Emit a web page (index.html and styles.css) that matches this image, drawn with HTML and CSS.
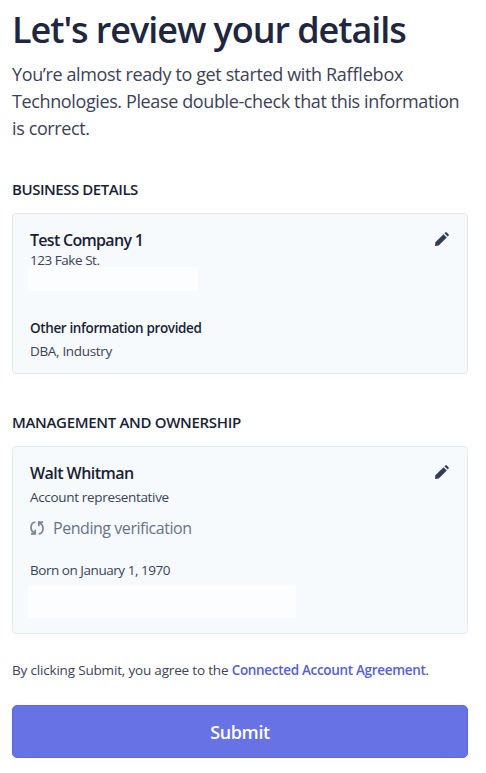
FILE: index.html
```html
<!DOCTYPE html>
<html lang="en">
	<head>
		<meta charset="UTF-8">
		<link rel="stylesheet" href="styles.css">
		<title>Review your details</title>
	</head>
	<body>
		<div class="container">
			<h1>Let's review your details</h1>
			<p class="lead">You’re almost ready to get started with <span class="company">Rafflebox</span><br>Technologies. Please double-check that this information<br>is correct.</p>

			<h2 class="business">BUSINESS DETAILS</h2>
			<div class="card">
				<div class="info">
					<h3>Test Company 1</h3>
					<p class="address">123 Fake St.</p>
					<div class="blank"></div>
					<h4>Other information provided</h4>
					<p class="other">DBA, Industry</p>
				</div>
				<svg class="edit" width="14" height="14" viewBox="0 0 14 14">
					<path d="M0 14l.4-3.700 8.100-8.100 3.300 3.300-8.100 8.100z"/>
					<path d="M9.400 1.300l.8-.8c.5-.5 1.100-.5 1.600 0l1.700 1.700c.5.5.5 1.100 0 1.600l-.8.8z"/>
				</svg>
			</div>

			<h2 class="management">MANAGEMENT AND OWNERSHIP</h2>
			<div class="card">
				<div class="info">
					<h3>Walt Whitman</h3>
					<p class="role">Account representative</p>
					<p class="pending">
						<svg width="14" height="14" viewBox="0 0 14 14">
							<path d="M5.300 1C2.500 1.500 1 4 1 6.800c0 2.300 1.200 4.100 3.200 5.200M1 12.900h4.200V8.700M8.700 13c2.800-.5 4.300-3 4.300-5.800 0-2.300-1.200-4.100-3.200-5.200M13 1.100H8.800v4.200"/>
						</svg>
						<span>Pending verification</span>
					</p>
					<p class="born">Born on January 1, 1970</p>
					<div class="blank wide"></div>
				</div>
				<svg class="edit" width="14" height="14" viewBox="0 0 14 14">
					<path d="M0 14l.4-3.700 8.100-8.100 3.300 3.300-8.100 8.100z"/>
					<path d="M9.400 1.300l.8-.8c.5-.5 1.100-.5 1.600 0l1.700 1.700c.5.5.5 1.100 0 1.600l-.8.8z"/>
				</svg>
			</div>

			<p class="agree">By clicking Submit, you agree to the <a href="#">Connected Account Agreement</a>.</p>
			<button type="button" class="btn">Submit</button>
		</div>
	</body>
</html>
```
FILE: styles.css
```css
body {
	margin: 0;
	background: #fff;
	font-family: "Open Sans", "Noto Sans", sans-serif;
	color: #3c4257;
}
h1, h2, h3, h4, p {
	margin: 0;
	white-space: nowrap;
}
.container {
	width: 456px;
	padding: 9px 0 0 12px;
}
h1 {
	font-size: 36px;
	line-height: 42px;
	font-weight: 600;
	letter-spacing: -1.05px;
	color: #20263f;
}
.lead {
	margin-top: 10px;
	font-size: 18px;
	line-height: 27px;
	letter-spacing: -0.38px;
}
.company {
	letter-spacing: -0.2px;
}
h2 {
	font-size: 15px;
	line-height: 20px;
	font-weight: 600;
	letter-spacing: -0.45px;
	color: #1a1f36;
}
.business {
	margin: 37px 0 14px;
}
.management {
	margin: 38px 0 14px;
	letter-spacing: -0.32px;
}
.card {
	display: flex;
	justify-content: space-between;
	box-sizing: border-box;
	height: 161px;
	padding: 16px 18px 0 17px;
	border: 1px solid #e3e8ee;
	border-radius: 4px;
	background: #f6fafd;
}
.management + .card {
	height: 188px;
}
h3 {
	font-size: 16px;
	line-height: 20px;
	font-weight: 600;
	letter-spacing: -0.7px;
	color: #1a1f36;
}
.management + .card h3 {
	letter-spacing: -0.55px;
}
h4 {
	margin-top: 26px;
	font-size: 13.5px;
	line-height: 22px;
	font-weight: 600;
	letter-spacing: -0.37px;
	color: #1a1f36;
}
.address, .other, .role, .born {
	font-size: 13.5px;
	line-height: 20px;
	letter-spacing: -0.46px;
}
.other {
	margin-top: 2px;
	letter-spacing: -0.33px;
}
.role {
	margin-top: 4px;
	letter-spacing: -0.33px;
}
.blank {
	width: 170px;
	height: 24px;
	margin: -3px 0 0 -2px;
	background: #fcfdfe;
}
.blank.wide {
	width: 268px;
	height: 32px;
	margin-top: 6px;
}
.edit {
	margin-top: 2px;
	fill: #343b54;
}
.pending {
	display: flex;
	align-items: center;
	gap: 9px;
	margin-top: 9px;
	font-size: 16px;
	line-height: 24px;
	letter-spacing: -0.45px;
	color: #697386;
}
.pending svg {
	fill: none;
	stroke: #7a8497;
	stroke-width: 1.7;
}
.born {
	margin-top: 20px;
}
.agree {
	margin-top: 26px;
	font-size: 13.5px;
	line-height: 20px;
	letter-spacing: -0.18px;
}
.agree a {
	font-weight: 600;
	letter-spacing: -0.32px;
	color: #5560d8;
	text-decoration: none;
}
.btn {
	display: block;
	width: 456px;
	height: 53px;
	margin-top: 25px;
	padding: 0;
	border: 1px solid #5b66df;
	border-radius: 5px;
	background: #6772e5;
	font-family: inherit;
	font-size: 18px;
	font-weight: 600;
	letter-spacing: -0.4px;
	color: #fff;
	box-shadow: 0 2px 6px rgba(60, 66, 87, 0.06);
}
```
